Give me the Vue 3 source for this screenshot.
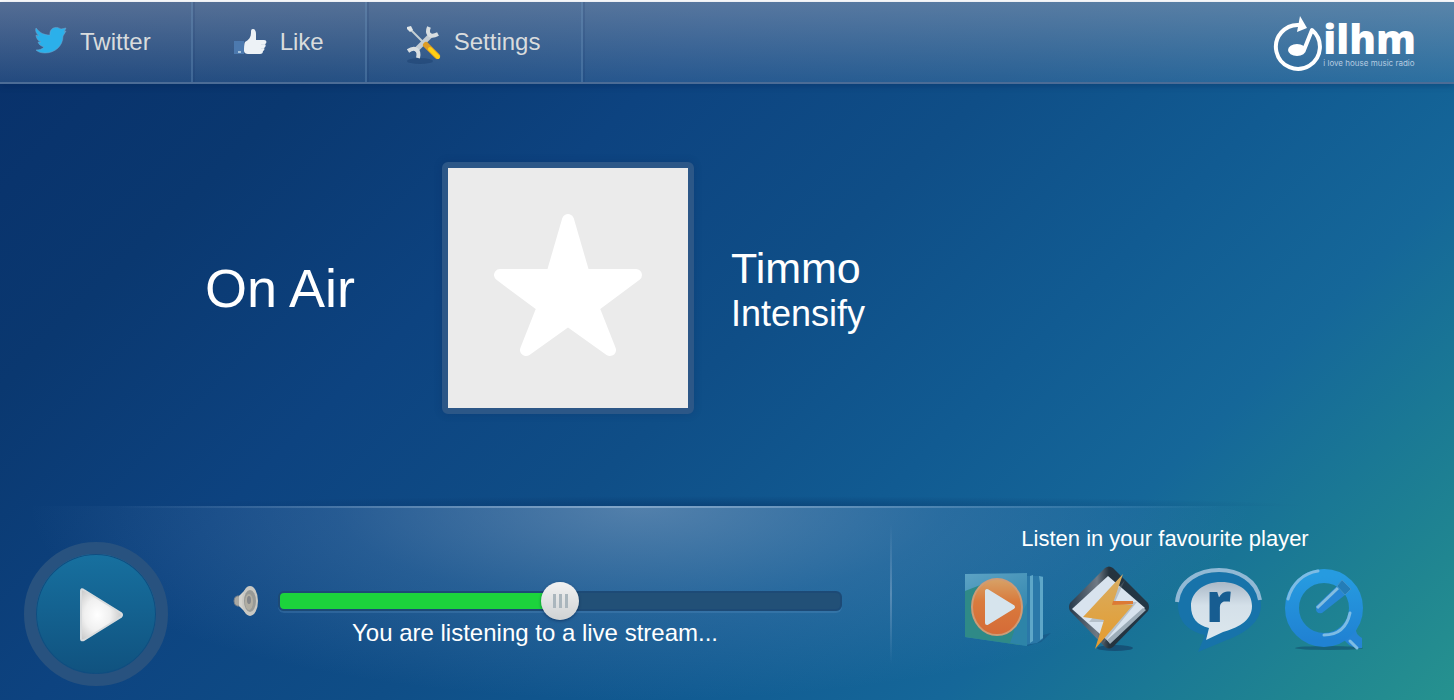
<script setup>
import { ref, computed } from 'vue'

const volume = ref(50)
const playing = ref(false)
const level = computed(() => ({ '--level': volume.value + '%' }))
</script>

<template>
  <div class="app">
    <header class="bar">
      <nav class="nav">
        <a class="nav-item first" href="#twitter">
          <svg class="nav-icon" viewBox="0 0 36 36" aria-hidden="true">
            <path fill="#2bb0ea" stroke="#6fa6d0" stroke-opacity=".5" d="M4 4c4 5 8 7 14 7-1-6 5-10 11-6 2 0 3-1 5-1l-2 4 2-1-3 5c0 10-8 17-18 17-4 0-7-1-9-3 4 0 6-1 8-3-3-1-5-2-6-5h3c-3-1-5-4-5-7l3 1c-3-3-4-5-3-8z" />
          </svg>
          <span>Twitter</span>
        </a>
        <a class="nav-item" href="#like">
          <svg class="nav-icon" viewBox="0 0 36 36" aria-hidden="true">
            <path fill="#4c79ae" d="M2 17h10v13H2z" />
            <path fill="#a9c4dc" d="M6 27h3v2H6z" />
            <path fill="#edf2f6" d="M13 18c4-2 6-5 6-9 0-3 0-4 2-4s3 2 3 5v6h8c3 0 3 3 1 4 1 1 1 3-1 4 1 1 0 3-1 3 0 2-1 3-3 3H16c-2 0-4-1-4-3 0-3 0-7 1-9z" />
            <path fill="#dbe4ea" d="M29 20h4v1h-4zM29 24h3v1h-3z" />
          </svg>
          <span>Like</span>
        </a>
        <a class="nav-item" href="#settings">
          <svg class="nav-icon" viewBox="0 0 36 36" aria-hidden="true">
            <ellipse cx="14" cy="37" rx="13" ry="3" fill="#1c3f70" opacity=".5" />
            <path fill="none" stroke="#c4ccd2" stroke-width="5" d="M9 27L25 11" />
            <path fill="none" stroke="#d8dee1" stroke-width="4" d="M23 3c-3 7 1 11 9 7M12 34c2-8-3-12-10-7" />
            <path fill="none" stroke="#c5cfd3" stroke-width="2" d="M4 5L19 20" />
            <path fill="#e2e7e8" d="M1 3l4-1 2 4-3 2-3-3z" />
            <path fill="none" stroke="#de9c25" stroke-width="6" stroke-linecap="round" d="M20 21L31 32" />
            <path fill="none" stroke="#ffd014" stroke-width="4" stroke-linecap="round" d="M24 25L32 33" />
          </svg>
          <span>Settings</span>
        </a>
      </nav>
      <a class="logo" href="#home" aria-label="ilhm, i love house music radio">
        <svg class="logo-mark" viewBox="0 0 50 56" aria-hidden="true">
          <path fill="none" stroke="#fff" stroke-width="4" stroke-linejoin="round" d="M27 9A22 22 0 1 0 39 14L31 34" />
          <path fill="#fff" d="M27 0l7 12-10 4z" />
          <ellipse cx="24" cy="34" rx="9" ry="6" fill="#fff" />
        </svg>
        <span class="logo-words">
          <span class="logo-name">ilhm</span>
          <span class="logo-tag">i love house music radio</span>
        </span>
      </a>
    </header>

    <main class="stage">
      <h1 class="on-air">On Air</h1>
      <div class="cover">
        <svg viewBox="0 0 240 240" role="img" aria-label="Cover">
          <path fill="#fff" stroke="#fff" stroke-width="12" stroke-linejoin="round" d="M120 52l16 55h52l-43 32 17 43-42-30-42 30 17-43-43-32h52z" />
        </svg>
      </div>
      <div class="track">
        <h2 class="artist">Timmo</h2>
        <p class="title">Intensify</p>
      </div>
    </main>

    <footer class="player">
      <button class="play" type="button" :aria-pressed="playing" aria-label="Play" @click="playing = !playing">
        <svg viewBox="0 0 120 120" aria-hidden="true">
          <defs>
            <radialGradient id="play-fill" cx=".4" cy=".5" r=".7">
              <stop offset="0" stop-color="#fff" />
              <stop offset=".45" stop-color="#f0f0f0" />
              <stop offset="1" stop-color="#bdbdbd" />
            </radialGradient>
          </defs>
          <path fill="url(#play-fill)" stroke="#d9dcde" stroke-width="2" stroke-linejoin="round" d="M45 37q0-3 3-1l37 23q2 2 0 4L48 86q-3 1-3-1z" />
        </svg>
      </button>

      <div class="controls">
        <div class="volume">
          <svg class="speaker" viewBox="0 0 28 32" aria-hidden="true">
            <path fill="#aaa9a3" stroke="#77818c" d="M9 11H5q-3 1-3 5t3 5h4z" />
            <path fill="#d4d3cd" d="M7 11l9-9v28l-9-9z" />
            <ellipse cx="18" cy="16" rx="8" ry="15" fill="#c9c8c2" />
            <ellipse cx="18" cy="16" rx="6" ry="11" fill="#989a97" />
            <ellipse cx="17" cy="17" rx="4" ry="8" fill="#b1aea3" />
            <ellipse cx="17" cy="15" rx="2" ry="4" fill="#85878a" />
          </svg>
          <input v-model="volume" class="slider" type="range" min="0" max="100" aria-label="Volume" :style="level">
        </div>
        <p class="status">You are listening to a live stream...</p>
      </div>

      <section class="external">
        <h3 class="external-title">Listen in your favourite player</h3>
        <div class="players">
          <a href="#windows-media" aria-label="Windows Media Player">
            <svg viewBox="0 0 92 92" aria-hidden="true">
              <defs>
                <linearGradient id="wm-orange" x2="0" y2="1"><stop offset="0" stop-color="#d7a267" /><stop offset=".4" stop-color="#d97b3d" /><stop offset="1" stop-color="#d56a37" /></linearGradient>
                <linearGradient id="wm-page" x2=".4" y2="1"><stop offset="0" stop-color="#5da3c4" /><stop offset="1" stop-color="#287fa9" /></linearGradient>
              </defs>
              <path fill="#174f7d" opacity=".5" d="M74 72l20-5-10 9-14 4z" />
              <path fill="#2a78a8" d="M68 10h18v63l-6 4-12 2z" />
              <path fill="#5ea7c8" d="M73 10l3-1v66l-3 2V15zM82 10l4 1v61l-3 2V17z" />
              <path fill="url(#wm-page)" d="M8 8l62-1v73L8 71z" />
              <path fill="#2f8a87" d="M8 25l18-7c16 18 28 38 37 61L8 71z" />
              <path fill="#2d84a8" d="M60 57l10-20v43l-17-3z" />
              <ellipse cx="40" cy="41" rx="25" ry="28" fill="url(#wm-orange)" stroke="#ce9b75" stroke-width="2" />
              <path fill="#d6e4ed" stroke="#d6e4ed" stroke-width="4" stroke-linejoin="round" d="M30 25v32l26-16z" />
            </svg>
          </a>
          <a href="#winamp" aria-label="Winamp">
            <svg viewBox="0 0 92 92" aria-hidden="true">
              <defs>
                <linearGradient id="wa-bolt" x2="0" y2="1"><stop offset="0" stop-color="#d8ad62" /><stop offset="1" stop-color="#e59b2d" /></linearGradient>
                <linearGradient id="wa-edge" x2="1"><stop offset="0" stop-color="#273a4b" /><stop offset=".35" stop-color="#707a85" /><stop offset=".5" stop-color="#25333e" /><stop offset="1" stop-color="#233746" /></linearGradient>
              </defs>
              <ellipse cx="50" cy="82" rx="18" ry="3" fill="#143c63" opacity=".6" />
              <path fill="url(#wa-edge)" d="M40 2q4-3 8 0l35 35q2 4 0 8L48 81q-4 3-8 0L5 45q-2-4 0-8z" />
              <path fill="#d8e3ee" d="M43 10l37 32-36 34L7 43z" />
              <path fill="#9dadb9" d="M78 42l3 2-36 34-3-4z" />
              <path fill="#78818a" opacity=".35" d="M60 14L50 36h22L38 78l6-22H24z" />
              <path fill="url(#wa-bolt)" d="M58 8L18 51l21 3-9 29 38-44-20-2z" />
              <path fill="#dc7a35" d="M48 35h20v3l-21 1z" />
            </svg>
          </a>
          <a href="#realplayer" aria-label="RealPlayer">
            <svg viewBox="0 0 92 92" aria-hidden="true">
              <defs>
                <linearGradient id="rp-face" x2="0" y2="1"><stop offset="0" stop-color="#a9b8c7" /><stop offset=".4" stop-color="#d4e0e9" /><stop offset="1" stop-color="#dce7ed" /></linearGradient>
              </defs>
              <path fill="#1773aa" d="M46 6c25 0 42 15 42 33 0 21-23 31-39 37L25 86l7-17C14 65 5 54 5 39 5 20 23 6 46 6z" />
              <path fill="none" stroke="#91b9d5" stroke-width="4" d="M4 36C6 14 27 4 46 4s38 10 41 30" />
              <path fill="url(#rp-face)" d="M48 16c19 0 31 10 31 24 0 16-16 22-29 26L33 74l3-12C24 59 18 52 18 40c0-14 13-24 30-24z" />
              <text x="33" y="56" class="real-r">r</text>
            </svg>
          </a>
          <a href="#quicktime" aria-label="QuickTime">
            <svg viewBox="0 0 92 92" aria-hidden="true">
              <defs>
                <linearGradient id="qt-ring" x2="0" y2="1"><stop offset="0" stop-color="#269be0" /><stop offset="1" stop-color="#2082d3" /></linearGradient>
              </defs>
              <ellipse cx="48" cy="82" rx="34" ry="2" fill="#14516e" opacity=".65" />
              <path fill="#2584d4" d="M59 69l16-7q-1 6 6 10v10q-10 1-16-6z" />
              <circle cx="43" cy="42" r="32" fill="none" stroke="url(#qt-ring)" stroke-width="14" />
              <path fill="none" stroke="#7dbce4" stroke-width="3" stroke-linecap="round" d="M7 33C11 18 22 7 37 5M43 69c15 0 23-8 26-22M69 75l7 7" />
              <path fill="#2786d4" d="M35 40L56 20l8 9-23 18q-6 1-6-4z" />
              <path fill="none" stroke="#84bddf" stroke-width="3" d="M36 42l21-20" />
              <path fill="#247db7" stroke="#3f93c9" d="M56 20l5-6 9 9-6 6z" />
            </svg>
          </a>
        </div>
      </section>
    </footer>
  </div>
</template>

<style>
body {
  margin: 0;
}
</style>

<style scoped>
.app {
  display: flex;
  flex-direction: column;
  box-sizing: border-box;
  min-height: 100vh;
  border-top: 2px solid #fff;
  color: #fff;
  font-family: "Liberation Sans", Arial, sans-serif;
  background: linear-gradient(135deg, #08306a 0%, #0a3870 18%, #0d4380 34%, #0f4e87 50%, #115b92 64%, #156799 76%, #1a7895 85%, #208691 93%, #26928f 100%);
}

h1, h2, h3, p {
  margin: 0;
  font-weight: 400;
}

.bar {
  display: flex;
  justify-content: space-between;
  height: 80px;
  border-bottom: 2px solid #4c6c96;
  background: linear-gradient(rgba(160, 170, 190, .5), rgba(130, 160, 195, .22));
  box-shadow: 0 2px 6px rgba(0, 30, 80, .3);
}

.nav {
  display: flex;
}

.nav-item {
  display: flex;
  align-items: center;
  gap: 12px;
  padding: 0 41px 0 39px;
  border-right: 2px solid rgba(110, 150, 190, .35);
  box-shadow: 2px 0 0 rgba(20, 50, 100, .15);
  color: #d9dcdd;
  font-size: 24px;
  text-decoration: none;
}

.nav-item.first {
  padding: 0 40px 0 32px;
}

.nav-icon {
  width: 36px;
  height: 36px;
  overflow: visible;
}

.logo {
  display: flex;
  align-items: center;
  margin-right: 38px;
  padding-top: 4px;
  color: #fff;
  text-decoration: none;
}

.logo-mark {
  width: 50px;
  height: 56px;
}

.logo-words {
  display: flex;
  flex-direction: column;
}

.logo-name {
  font: 800 40px/38px "Open Sans", sans-serif;
}

.logo-tag {
  color: #b5cbe0;
  font: 8px/10px Inter, sans-serif;
}

.stage {
  display: grid;
  flex: 1;
  grid-template-columns: minmax(0, 442fr) 252px minmax(0, 760fr);
  align-items: center;
  align-content: start;
  padding: 78px 0 88px;
}

.on-air {
  padding-right: 87px;
  font-size: 54px;
  text-align: right;
}

.cover {
  border: 6px solid #2c5787;
  border-radius: 6px;
  background: #ebebeb;
  box-shadow: 0 0 8px rgba(0, 30, 80, .2);
}

.cover svg {
  display: block;
}

.track {
  padding: 4px 0 0 37px;
}

.artist {
  font-size: 43px;
  line-height: 48px;
}

.title {
  font-size: 36px;
  line-height: 44px;
}

.player {
  position: relative;
  display: flex;
  align-items: flex-start;
  padding: 36px 0 14px 24px;
  background: radial-gradient(ellipse 42% 100% at 44% 0, rgba(150, 175, 205, .5), rgba(110, 150, 195, .25) 50%, rgba(90, 140, 190, 0));
}

.player::before {
  content: "";
  position: absolute;
  inset: -10px 10% auto;
  height: 10px;
  background: radial-gradient(ellipse 50% 100% at 50% 100%, rgba(0, 35, 85, .35), rgba(0, 35, 85, 0));
}

.player::after {
  content: "";
  position: absolute;
  inset: 0 16% auto 8%;
  height: 2px;
  background: linear-gradient(90deg, rgba(160, 190, 220, 0), rgba(160, 190, 220, .6) 45%, rgba(160, 190, 220, 0));
}

.play {
  flex: none;
  width: 144px;
  height: 144px;
  padding: 0;
  border: 12px solid #28527f;
  border-radius: 50%;
  background: linear-gradient(#17709f, #10527f);
  box-shadow: inset 0 0 0 1px #104d80;
  cursor: pointer;
}

.play svg {
  display: block;
}

.controls {
  flex: 614 1 0;
  margin: 40px 48px 0 60px;
}

.volume {
  display: flex;
  align-items: center;
  gap: 18px;
  height: 38px;
}

.speaker {
  flex: none;
  width: 28px;
  height: 32px;
  margin-left: 4px;
}

.slider {
  flex: 1;
  min-width: 0;
  height: 38px;
  margin: 0;
  appearance: none;
  background: transparent;
  cursor: pointer;
}

.slider::-webkit-slider-runnable-track {
  height: 20px;
  box-sizing: border-box;
  border: 2px solid #1d4a76;
  border-radius: 6px;
  background: linear-gradient(90deg, #1cd33c var(--level), #225077 var(--level));
  box-shadow: 0 2px 0 rgba(100, 150, 200, .25);
}

.slider::-webkit-slider-thumb {
  width: 38px;
  height: 38px;
  margin-top: -11px;
  appearance: none;
  border-radius: 50%;
  background:
    linear-gradient(90deg, #aab6bd 3px, transparent 3px 6px, #aab6bd 6px 9px, transparent 9px 12px, #aab6bd 12px) center / 15px 14px no-repeat,
    linear-gradient(#f2f2f2, #cfd2d3);
  box-shadow: 0 1px 3px rgba(0, 20, 60, .5);
}

.status {
  font-size: 24px;
  line-height: 26px;
  text-align: center;
}

.external {
  flex: 550 1 0;
  box-sizing: border-box;
  min-height: 140px;
  margin-top: -18px;
  padding-right: 14px;
  background: linear-gradient(rgba(150, 180, 210, 0), rgba(150, 180, 210, .45) 50%, rgba(150, 180, 210, 0)) left / 2px 100% no-repeat;
}

.external-title {
  font-size: 22px;
  line-height: 30px;
  text-align: center;
}

.players {
  display: flex;
  justify-content: center;
  gap: 16px;
  padding-top: 12px;
}

.players a, .players svg {
  display: block;
  width: 92px;
  height: 92px;
  overflow: visible;
}

.real-r {
  fill: #175d91;
  font: 800 54px "Open Sans", sans-serif;
}
</style>
